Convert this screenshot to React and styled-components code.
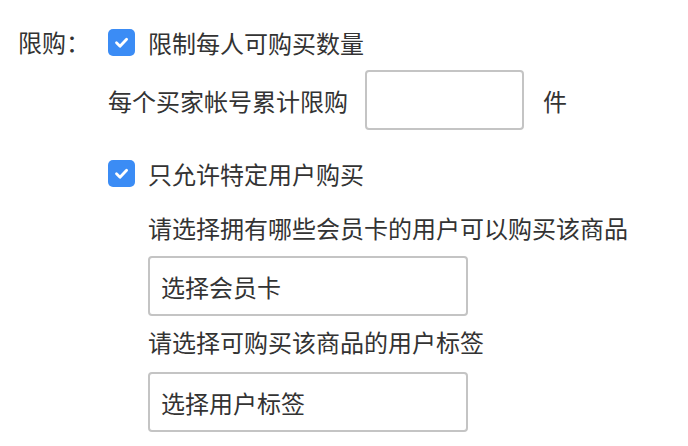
import React from "react";
import styled, { createGlobalStyle } from "styled-components";

const GlobalStyle = createGlobalStyle`
  html, body {
    margin: 0;
    padding: 0;
    background: #ffffff;
  }
  body {
    font-family: "Noto Sans CJK SC", "Noto Sans", sans-serif;
    color: #333333;
  }
`;

const Form = styled.div`
  display: grid;
  grid-template-columns: 90px 1fr;
  padding: 28px 0 0 18px;
  font-size: 24px;
`;

const FieldLabel = styled.div`
  height: 28px;
  line-height: 28px;
  white-space: nowrap;
`;

const FieldBody = styled.div`
  display: flex;
  flex-direction: column;
`;

const CheckRow = styled.label`
  display: flex;
  align-items: center;
  gap: 13px;
  height: 28px;
  margin-top: ${(p) => p.$top || 0}px;
  white-space: nowrap;
`;

const Box = styled.span`
  width: 27px;
  height: 27px;
  border-radius: 5px;
  background: #3b8cf5;
  display: flex;
  align-items: center;
  justify-content: center;
  flex-shrink: 0;
`;

const LimitRow = styled.div`
  display: flex;
  align-items: center;
  margin-top: 14px;
  white-space: nowrap;
`;

const Input = styled.div`
  box-sizing: border-box;
  width: ${(p) => p.$w}px;
  height: 60px;
  border: 2px solid #c4c4c4;
  border-radius: 4px;
  display: flex;
  align-items: center;
  padding-left: 11px;
  margin: ${(p) => p.$margin || "0"};
  font-size: 24px;
  color: #333333;
`;

const SubBlock = styled.div`
  display: flex;
  flex-direction: column;
  padding-left: 40px;
`;

const Hint = styled.div`
  line-height: 34px;
  margin-top: ${(p) => p.$top}px;
  white-space: nowrap;
`;

function Checkbox({ children, top }) {
  return (
    <CheckRow $top={top}>
      <Box>
        <svg width="17" height="17" viewBox="0 0 17 17">
          <path d="M3.5 8.8 L7 12.2 L13.6 5.2" fill="none" stroke="#fff" strokeWidth="2.8" strokeLinecap="round" strokeLinejoin="round" />
        </svg>
      </Box>
      <span>{children}</span>
    </CheckRow>
  );
}

export default function App() {
  return (
    <>
      <GlobalStyle />
      <Form>
        <FieldLabel>限购：</FieldLabel>
        <FieldBody>
          <Checkbox>限制每人可购买数量</Checkbox>
          <LimitRow>
            每个买家帐号累计限购
            <Input $w={159} $margin="0 19px 0 17px" />
            件
          </LimitRow>
          <Checkbox top={29}>只允许特定用户购买</Checkbox>
          <SubBlock>
            <Hint $top={24}>请选择拥有哪些会员卡的用户可以购买该商品</Hint>
            <Input $w={320} $margin="11px 0 0 0">选择会员卡</Input>
            <Hint $top={9}>请选择可购买该商品的用户标签</Hint>
            <Input $w={320} $margin="13px 0 0 0">选择用户标签</Input>
          </SubBlock>
        </FieldBody>
      </Form>
    </>
  );
}
